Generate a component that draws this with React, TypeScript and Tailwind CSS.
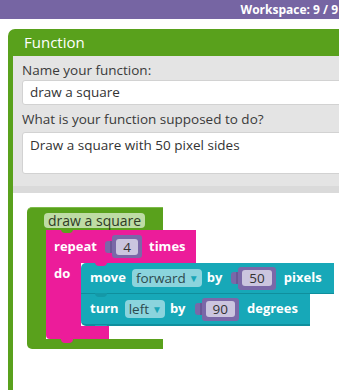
import React from "react";

const font = { fontFamily: '"Open Sans", "Noto Sans", sans-serif' };

// little output tab + number field, the purple value blocks
const NumberBlock = ({ value }: { value: string }) => (
  <div className="flex items-center">
    <div className="w-[7px] h-[12px] bg-[#7a68a8] rounded-l-[3px] border-r-[2px] border-[#6a5896]" />
    <div className="h-[23px] bg-[#7a68a8] rounded-[3px] flex items-center px-[4px]">
      <div className="h-[16px] px-[7px] min-w-[22px] bg-[#cbc5df] rounded-[3px] text-[13.5px] leading-[16px] font-normal text-[#333] text-center">
        {value}
      </div>
    </div>
  </div>
);

const Dropdown = ({ label }: { label: string }) => (
  <div className="h-[18px] bg-[#8bd4dd] rounded-[4px] flex items-center pl-[4px] pr-[3px] gap-[3px]">
    <span className="text-[13.5px] leading-[18px] text-[#2d4a4e] font-normal">{label}</span>
    <span className="text-[10px] text-[#1aa6b7]">▼</span>
  </div>
);

export default function App() {
  return (
    <div className="w-[339px] h-[390px] overflow-hidden bg-white" style={font}>
      {/* top bar */}
      <div className="h-[19px] bg-[#7665a3] flex items-center justify-end pr-[1px] text-white text-[12px] font-bold whitespace-nowrap">
        Workspace: 9 / 9
      </div>

      {/* function editor panel */}
      <div className="mt-[10px] ml-[8px] w-[360px] h-[361px] bg-[#59a11c] rounded-tl-[7px] flex flex-col">
        <div className="h-[27px] shrink-0 pl-[16px] flex items-center text-white text-[15px]">Function</div>
        <div className="ml-[5px] flex-1 bg-white flex flex-col">
          <div className="bg-[#e4e4e4] pl-[9px] pt-[4px] border-b-[7px] border-[#dadada] pb-[12px]">
            <div className="text-[13.5px] text-[#3a3a3a] h-[20px] leading-[20px]">Name your function:</div>
            <div className="h-[25px] bg-white border border-[#d2d2d2] rounded-[3px] px-[7px] text-[13.5px] leading-[23px] text-[#333]">
              draw a square
            </div>
            <div className="text-[13.5px] text-[#3a3a3a] h-[26px] leading-[26px] mt-[1px]">What is your function supposed to do?</div>
            <div className="h-[42px] bg-white border border-[#d2d2d2] rounded-[3px] px-[7px] pt-[2px] text-[13.5px] text-[#333]">
              Draw a square with 50 pixel sides
            </div>
          </div>

          {/* workspace */}
          <div className="ml-[14px] mt-[14px] w-max">
            {/* definition block */}
            <div className="w-[136px] h-[23px] bg-[#59a11c] rounded-tl-[5px] pl-[17px] pt-[5px] border-t border-[#7dbb4a]">
              <div className="w-fit h-[15px] bg-[#bedca5] rounded-[4px] px-[4px] text-[14px] leading-[15px] text-[#2f3a26]">
                draw a square
              </div>
            </div>
            <div className="flex">
              <div className="w-[19px] bg-[#59a11c]" />
              {/* repeat block */}
              <div className="flex flex-col">
                <div className="relative w-[150px] h-[33px] bg-[#ec1c9a] flex items-center pl-[8px] text-white text-[13px] font-bold">
                  <div className="absolute left-[15px] -top-[1px] w-[12px] h-[4px] bg-[#59a11c] rounded-b-[4px]" />
                  <span>repeat</span>
                  <div className="ml-[8px]">
                    <NumberBlock value="4" />
                  </div>
                  <span className="ml-[7px]">times</span>
                </div>
                <div className="flex">
                  <div className="w-[35px] bg-[#ec1c9a] pl-[8px] pt-[1px] text-white text-[13px] font-bold">do</div>
                  <div className="flex flex-col">
                    {/* move block */}
                    <div className="relative w-[253px] h-[31px] bg-[#17a8b8] rounded-tl-[5px] flex items-center pl-[9px] text-white text-[13px] font-bold border-b border-[#0f8f9d]">
                      <div className="absolute left-[14px] -top-[1px] w-[12px] h-[4px] bg-[#ec1c9a] rounded-b-[4px]" />
                      <span>move</span>
                      <div className="ml-[6px]">
                        <Dropdown label="forward" />
                      </div>
                      <span className="ml-[5px]">by</span>
                      <div className="ml-[9px]">
                        <NumberBlock value="50" />
                      </div>
                      <span className="ml-[8px]">pixels</span>
                    </div>
                    {/* turn block */}
                    <div className="relative w-[229px] h-[32px] bg-[#17a8b8] rounded-bl-[5px] flex items-center pl-[9px] text-white text-[13px] font-bold border-b-[2px] border-[#0f8f9d]">
                      <div className="absolute left-[14px] -top-[1px] w-[12px] h-[4px] bg-[#1498a7] rounded-b-[4px]" />
                      <span>turn</span>
                      <div className="ml-[6px]">
                        <Dropdown label="left" />
                      </div>
                      <span className="ml-[5px]">by</span>
                      <div className="ml-[9px]">
                        <NumberBlock value="90" />
                      </div>
                      <span className="ml-[8px]">degrees</span>
                      <div className="absolute left-[14px] -bottom-[5px] w-[12px] h-[4px] bg-[#17a8b8] rounded-b-[4px]" />
                    </div>
                  </div>
                </div>
                <div className="relative w-[63px] h-[13px] bg-[#ec1c9a] rounded-bl-[4px]">
                  <div className="absolute left-[15px] -bottom-[4px] w-[12px] h-[4px] bg-[#ec1c9a] rounded-b-[4px]" />
                </div>
              </div>
            </div>
            <div className="w-[136px] h-[10px] bg-[#59a11c] rounded-bl-[5px]" />
          </div>
        </div>
      </div>
    </div>
  );
}
